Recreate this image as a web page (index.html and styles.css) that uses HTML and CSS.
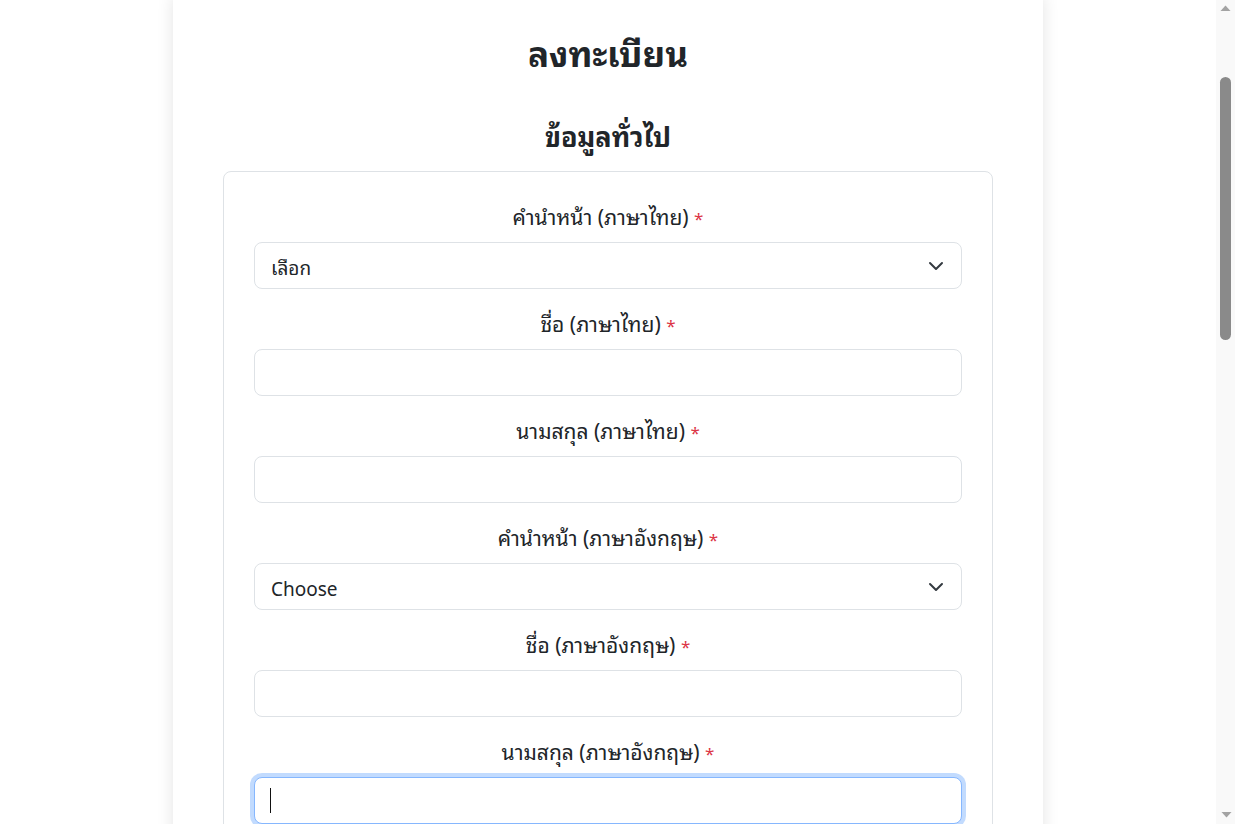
FILE: index.html
```html
<!DOCTYPE html>
<html lang="th">
<head>
<meta charset="utf-8">
<title>ลงทะเบียน</title>
<link rel="stylesheet" href="styles.css">
</head>
<body>
<div class="viewport" id="viewport">
<div class="page">
  <main class="card">
    <h1 class="title">ลงทะเบียน</h1>

    <h2 class="section-title">ข้อมูลทั่วไป</h2>
    <div class="box">
      <div class="group">
        <label class="label" for="prefix_th">คำนำหน้า (ภาษาไทย) <span class="req">*</span></label>
        <div class="select-wrap">
          <select class="control select" id="prefix_th">
            <option>เลือก</option>
            <option>นาย</option>
            <option>นาง</option>
            <option>นางสาว</option>
          </select>
          <svg class="chevron" viewBox="0 0 16 16" width="16" height="16"><path d="m2 5 6 6 6-6" fill="none" stroke="#343a40" stroke-width="2" stroke-linecap="round" stroke-linejoin="round"/></svg>
        </div>
      </div>
      <div class="group">
        <label class="label" for="fname_th">ชื่อ (ภาษาไทย) <span class="req">*</span></label>
        <input class="control" id="fname_th" type="text">
      </div>
      <div class="group">
        <label class="label" for="lname_th">นามสกุล (ภาษาไทย) <span class="req">*</span></label>
        <input class="control" id="lname_th" type="text">
      </div>
      <div class="group">
        <label class="label" for="prefix_en">คำนำหน้า (ภาษาอังกฤษ) <span class="req">*</span></label>
        <div class="select-wrap">
          <select class="control select" id="prefix_en">
            <option>Choose</option>
            <option>Mr.</option>
            <option>Mrs.</option>
            <option>Miss</option>
          </select>
          <svg class="chevron" viewBox="0 0 16 16" width="16" height="16"><path d="m2 5 6 6 6-6" fill="none" stroke="#343a40" stroke-width="2" stroke-linecap="round" stroke-linejoin="round"/></svg>
        </div>
      </div>
      <div class="group">
        <label class="label" for="fname_en">ชื่อ (ภาษาอังกฤษ) <span class="req">*</span></label>
        <input class="control" id="fname_en" type="text">
      </div>
      <div class="group">
        <label class="label" for="lname_en">นามสกุล (ภาษาอังกฤษ) <span class="req">*</span></label>
        <div class="select-wrap">
          <input class="control is-focused" id="lname_en" type="text">
          <span class="caret"></span>
        </div>
      </div>
    </div>

    <h2 class="section-title">ข้อมูลการติดต่อ</h2>
    <div class="box">
      <div class="group">
        <label class="label" for="idcard">เลขบัตรประจำตัวประชาชน <span class="req">*</span></label>
        <input class="control" id="idcard" type="text">
      </div>
      <div class="group">
        <label class="label" for="email">อีเมล <span class="req">*</span></label>
        <input class="control" id="email" type="email">
      </div>
      <div class="group">
        <label class="label" for="phone">เบอร์โทรศัพท์ <span class="req">*</span></label>
        <input class="control" id="phone" type="tel">
      </div>
      <div class="group">
        <label class="label" for="address">ที่อยู่ <span class="req">*</span></label>
        <input class="control" id="address" type="text">
      </div>
    </div>

    <h2 class="section-title">ข้อมูลบัญชีผู้ใช้</h2>
    <div class="box">
      <div class="group">
        <label class="label" for="username">ชื่อผู้ใช้ <span class="req">*</span></label>
        <input class="control" id="username" type="text">
      </div>
      <div class="group">
        <label class="label" for="password">รหัสผ่าน <span class="req">*</span></label>
        <input class="control" id="password" type="password">
      </div>
    </div>

    <div class="actions">
      <button class="btn" type="button">ลงทะเบียน</button>
    </div>
  </main>
</div>
</div>
<div class="scrollbar" aria-hidden="true">
  <div class="sb-btn">
    <svg viewBox="0 0 19 19" width="19" height="19"><path d="M4.5 11 L14.5 11 L9.5 5.5 Z" fill="#a3a3a3"/></svg>
  </div>
  <div class="sb-track">
    <div class="sb-thumb"></div>
  </div>
  <div class="sb-btn">
    <svg viewBox="0 0 19 19" width="19" height="19"><path d="M5 7 L15 7 L10 12.5 Z" fill="#a3a3a3" transform="translate(0.5 0)"/></svg>
  </div>
</div>
<script src="script.js"></script>
</body>
</html>
```

FILE: styles.css
```css
* { box-sizing: border-box; }

html, body {
  margin: 0;
  padding: 0;
  background: #fff;
  height: 100%;
  overflow: hidden;
}

body {
  display: flex;
  font-family: "Segoe UI", "Noto Sans Thai Looped", "Leelawadee UI", Tahoma, "Loma", "Garuda", "Waree", "Noto Sans", "Noto Sans Thai", "Noto Sans CJK SC", sans-serif;
  color: #212529;
  font-size: 16px;
  line-height: 1.5;
}

.viewport {
  flex: 1;
  height: 100vh;
  overflow-y: scroll;
  overflow-x: hidden;
}

/* fake classic scrollbar */
.scrollbar {
  width: 19px;
  flex: 0 0 19px;
  height: 100vh;
  background: #f9f9f9;
  display: flex;
  flex-direction: column;
}

.sb-btn {
  height: 19px;
  flex: 0 0 19px;
}

.sb-btn svg {
  display: block;
}

.sb-track {
  flex: 1;
  padding-top: 58px;
}

.sb-thumb {
  width: 11px;
  height: 263px;
  margin-left: 4px;
  background: #8a8a8a;
  border-radius: 6px;
}

.page {
  min-height: 2475px;
  padding: 184px 0 40px;
}

.card {
  width: 870px;
  margin: 0 auto;
  background: #fff;
  box-shadow: 0 0 16px rgba(0, 0, 0, 0.11);
  padding: 36px 50px 48px;
}

.title {
  margin: 0 0 50px;
  text-align: center;
  font-size: 35px;
  line-height: 38px;
  height: 38px;
  font-weight: 700;
}

.section-title {
  margin: 0 0 22px;
  text-align: center;
  font-size: 27px;
  line-height: 29px;
  height: 29px;
  font-weight: 700;
}

.box {
  border: 1px solid #dee2e6;
  border-radius: 8px;
  padding: 34px 30px 6px;
  margin-bottom: 40px;
}

.group {
  margin-bottom: 24px;
}

.label {
  display: block;
  text-align: center;
  font-size: 21px;
  line-height: 24px;
  height: 24px;
  margin: -2px 0 14px;
}

.req {
  color: #dc3545;
  font-size: 17px;
  line-height: 0;
}

.control {
  display: block;
  width: 100%;
  height: 47px;
  padding: 9px 16px 7px;
  font-family: inherit;
  font-size: 19px;
  line-height: 29px;
  color: #212529;
  background: #fff;
  border: 1px solid #dee2e6;
  border-radius: 8px;
  outline: none;
  appearance: none;
  -webkit-appearance: none;
}

.control:focus,
.control.is-focused {
  border-color: #86b7fe;
  box-shadow: 0 0 0 4px rgba(13, 110, 253, 0.25);
  caret-color: transparent;
}

.select-wrap {
  position: relative;
}

.select {
  padding-right: 48px;
}

.chevron {
  position: absolute;
  right: 18px;
  top: 50%;
  margin-top: -8px;
  pointer-events: none;
}

.caret {
  position: absolute;
  left: 16px;
  top: 11px;
  width: 1px;
  height: 25px;
  background: #111;
  pointer-events: none;
}

.actions {
  text-align: center;
}

.btn {
  font-family: inherit;
  font-size: 18px;
  padding: 8px 32px;
  border: 1px solid #0d6efd;
  background: #0d6efd;
  color: #fff;
  border-radius: 8px;
}
```

FILE: script.js
```js
var vp = document.getElementById('viewport');
var field = document.getElementById('lname_en');
try { field.focus({ preventScroll: true }); } catch (e) { field.focus(); }
vp.scrollTop = 188;
```
